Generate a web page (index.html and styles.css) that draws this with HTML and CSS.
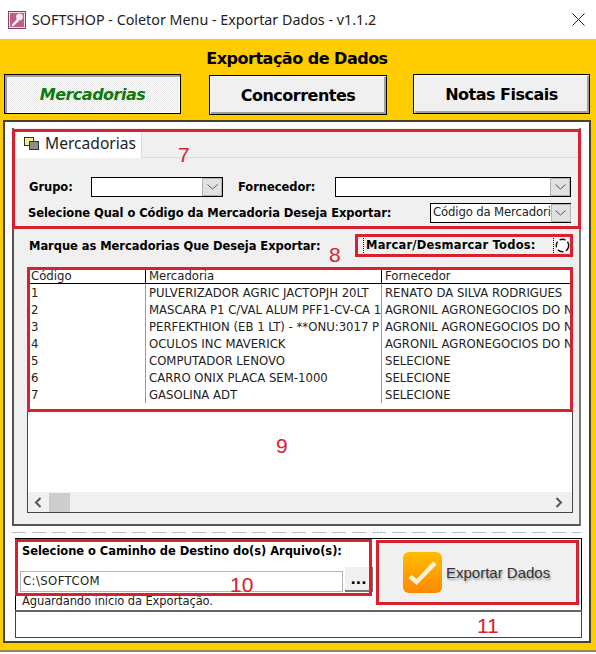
FILE: index.html
```html
<!DOCTYPE html>
<html lang="pt-BR">
<head>
    <meta charset="UTF-8">
    <title>SOFTSHOP - Coletor Menu - Exportar Dados - v1.1.2</title>
    <link rel="stylesheet" href="styles.css">
</head>
<body>
    <div class="titlebar">
        <svg class="app-icon" width="18" height="18" viewBox="0 0 18 18">
            <rect x="0.5" y="0.5" width="17" height="17" fill="#f3d9e4" stroke="#8a3d63"/>
            <rect x="2" y="2" width="14" height="14" fill="#b9608e"/>
            <path d="M3.5 14 L9 8 L11 10 L5 15.5 Z" fill="#fbeef4"/>
            <circle cx="11.5" cy="6" r="3.4" fill="#f7e6ee"/>
        </svg>
        <span class="title-text">SOFTSHOP - Coletor Menu - Exportar Dados - v1.1.2</span>
        <svg class="close-icon" width="13" height="13" viewBox="0 0 13 13">
            <path d="M0.5 0.5 L12.5 12.5 M12.5 0.5 L0.5 12.5" stroke="#222" stroke-width="1" fill="none"/>
        </svg>
    </div>

    <div class="frame">
        <h1 class="heading">Exportação de Dados</h1>
        <div class="tabs">
            <button class="tab-btn active">Mercadorias</button>
            <button class="tab-btn middle">Concorrentes</button>
            <button class="tab-btn">Notas Fiscais</button>
        </div>

        <div class="panel">
            <div class="group">
                <div class="tab-strip">
                    <div class="tab-label">
                        <svg width="15" height="13" viewBox="0 0 15 13">
                            <rect x="0.5" y="0.5" width="9" height="8" fill="#f5ee8c" stroke="#333"/>
                            <rect x="5.5" y="4.5" width="9" height="8" fill="#8c8c8c" stroke="#333"/>
                        </svg>
                        <span>Mercadorias</span>
                    </div>
                </div>

                <div class="filters">
                    <div class="filter-row">
                        <label class="lbl lbl-grupo">Grupo:</label>
                        <div class="combo combo-grupo"><span class="combo-arrow"><svg width="11" height="6" viewBox="0 0 11 6"><path d="M0.5 0.5 L5.5 5 L10.5 0.5" fill="none" stroke="#555"/></svg></span></div>
                        <label class="lbl lbl-forn">Fornecedor:</label>
                        <div class="combo combo-forn"><span class="combo-arrow"><svg width="11" height="6" viewBox="0 0 11 6"><path d="M0.5 0.5 L5.5 5 L10.5 0.5" fill="none" stroke="#555"/></svg></span></div>
                    </div>
                    <div class="filter-row row-codigo">
                        <label class="lbl">Selecione Qual o Código da Mercadoria Deseja Exportar:</label>
                        <div class="combo combo-cod"><span class="combo-text">Código da Mercadori</span><span class="combo-arrow"><svg width="11" height="6" viewBox="0 0 11 6"><path d="M0.5 0.5 L5.5 5 L10.5 0.5" fill="none" stroke="#555"/></svg></span></div>
                    </div>
                </div>

                <div class="mark-row">
                    <span class="lbl">Marque as Mercadorias Que Deseja Exportar:</span>
                    <div class="mark-all">
                        <span class="lbl">Marcar/Desmarcar Todos:</span>
                        <span class="radio-box">
                            <svg width="15" height="15" viewBox="0 0 15 15">
                                <circle cx="7.5" cy="7.5" r="6.2" fill="#fff" stroke="#111" stroke-width="1.4" stroke-dasharray="6 2.5"/>
                            </svg>
                        </span>
                    </div>
                </div>

                <div class="grid">
                    <div class="grid-body">
                        <div class="grid-row grid-head"><span class="c1">Código</span><span class="c2">Mercadoria</span><span class="c3">Fornecedor</span></div>
                        <div class="grid-row"><span class="c1">1</span><span class="c2">PULVERIZADOR AGRIC JACTOPJH 20LT</span><span class="c3">RENATO DA SILVA RODRIGUES</span></div>
                        <div class="grid-row"><span class="c1">2</span><span class="c2">MASCARA P1 C/VAL ALUM PFF1-CV-CA 1</span><span class="c3">AGRONIL AGRONEGOCIOS DO NORTE</span></div>
                        <div class="grid-row"><span class="c1">3</span><span class="c2">PERFEKTHION (EB 1 LT) - **ONU:3017 P</span><span class="c3">AGRONIL AGRONEGOCIOS DO NORTE</span></div>
                        <div class="grid-row"><span class="c1">4</span><span class="c2">OCULOS INC MAVERICK</span><span class="c3">AGRONIL AGRONEGOCIOS DO NORTE</span></div>
                        <div class="grid-row"><span class="c1">5</span><span class="c2">COMPUTADOR LENOVO</span><span class="c3">SELECIONE</span></div>
                        <div class="grid-row"><span class="c1">6</span><span class="c2">CARRO ONIX PLACA SEM-1000</span><span class="c3">SELECIONE</span></div>
                        <div class="grid-row"><span class="c1">7</span><span class="c2">GASOLINA ADT</span><span class="c3">SELECIONE</span></div>
                    </div>
                    <div class="hscroll">
                        <svg width="8" height="11" viewBox="0 0 8 11"><path d="M6.5 1 L2 5.5 L6.5 10" fill="none" stroke="#555" stroke-width="2"/></svg>
                        <span class="thumb"></span>
                        <svg class="arrow-right" width="8" height="11" viewBox="0 0 8 11"><path d="M1.5 1 L6 5.5 L1.5 10" fill="none" stroke="#555" stroke-width="2"/></svg>
                    </div>
                </div>
            </div>

            <div class="dashes"></div>

            <div class="export-box">
                <div class="path-side">
                    <div class="lbl path-label">Selecione o Caminho de Destino do(s) Arquivo(s):</div>
                    <div class="path-row">
                        <div class="path-input">C:\SOFTCOM</div>
                        <button class="browse">...</button>
                    </div>
                    <div class="status-text">Aguardando início da Exportação.</div>
                </div>
                <button class="export-btn">
                    <svg width="39" height="41" viewBox="0 0 39 41">
                        <defs>
                            <linearGradient id="orange" x1="0" y1="0" x2="0" y2="1">
                                <stop offset="0" stop-color="#ffbc00"/>
                                <stop offset="1" stop-color="#ff8800"/>
                            </linearGradient>
                        </defs>
                        <rect width="39" height="41" rx="6" fill="url(#orange)"/>
                        <path d="M7 24.5 L13.5 30 L32 11" fill="none" stroke="#fff3d6" stroke-width="4.5"/>
                    </svg>
                    <span>Exportar Dados</span>
                </button>
            </div>
            <div class="progress"></div>
        </div>
    </div>

    <!-- marcações vermelhas sobre a tela -->
    <div class="mark m7"></div>
    <div class="mark m8"></div>
    <div class="mark m9"></div>
    <div class="mark m10"></div>
    <div class="mark m11"></div>
    <span class="num n7">7</span>
    <span class="num n8">8</span>
    <span class="num n9">9</span>
    <span class="num n10">10</span>
    <span class="num n11">11</span>
</body>
</html>
```

FILE: styles.css
```css
* {
    box-sizing: border-box;
}
html, body {
    margin: 0;
    width: 596px;
    height: 654px;
    overflow: hidden;
    background: #fff;
    font-family: "Noto Sans", sans-serif;
    color: #000;
}
.titlebar {
    height: 39px;
    display: flex;
    align-items: center;
    padding: 0 11px 0 8px;
    background: #fff;
}
.title-text {
    margin-left: 6px;
    font-size: 14.3px;
    color: #222;
    flex: 1;
}
.frame {
    height: 613px;
    background: #ffcc00;
    padding: 0 5px 0 3px;
    border-bottom: 2px solid #8d8a55;
}
.heading {
    margin: 0;
    height: 35px;
    line-height: 39px;
    font-size: 16px;
    font-weight: bold;
    font-family: "DejaVu Sans", sans-serif;
    letter-spacing: -0.5px;
    text-align: center;
}
.tabs {
    display: flex;
    height: 46px;
    padding-left: 1px;
}
.tab-btn {
    flex: none;
    width: 177px;
    height: 40px;
    font-size: 16px;
    font-weight: bold;
    font-family: "DejaVu Sans", sans-serif;
    letter-spacing: -0.5px;
    background: #f0f0f0;
    border: 1px solid #000;
    box-shadow: inset 1px 1px 0 #fff, inset -2px -2px 0 #a0a0a0;
    padding: 0;
}
.tab-btn.middle {
    width: 178px;
    margin: 1px 26px 0 28px;
}
.tab-btn.active {
    color: #0a7a0a;
    font-style: italic;
    background: repeating-conic-gradient(#fff 0 25%, #e4e4e4 0 50%) 0 0 / 2px 2px;
    box-shadow: inset 2px 2px 0 #a0a0a0, inset -1px -1px 0 #fff;
}
.panel {
    width: 588px;
    height: 523px;
    background: #fff;
    border: 2px solid #45432f;
    padding: 6px 8px 0 7px;
}
.group {
    height: 398px;
    background: #f0f0f0;
    border: 2px solid #555;
    border-top: 0;
    border-right-color: #777;
    padding: 0 0 0 2px;
}
.tab-strip {
    height: 30px;
    padding: 4px 0 0 0;
    border-bottom: 1px solid #dcdcdc;
}
.tab-label {
    width: 126px;
    height: 26px;
    background: #fff;
    border-right: 1px solid #dcdcdc;
    display: flex;
    align-items: center;
    gap: 6px;
    padding: 0 0 4px 8px;
    font-size: 15.6px;
    color: #222;
}
.lbl {
    font-family: "DejaVu Sans", sans-serif;
    font-size: 11.5px;
    font-weight: bold;
    letter-spacing: -0.05px;
    white-space: nowrap;
}
.filters {
    padding: 19px 8px 0 12px;
}
.filter-row {
    display: flex;
    align-items: center;
    height: 20px;
}
.row-codigo {
    margin-top: 6px;
    justify-content: space-between;
}
.lbl-grupo {
    width: 63px;
    padding-left: 1px;
}
.lbl-forn {
    width: 97px;
    margin-left: 15px;
}
.combo {
    height: 20px;
    background: #fff;
    border: 1px solid #000;
    display: flex;
    justify-content: flex-end;
}
.combo-grupo {
    width: 132px;
}
.combo-forn {
    width: 236px;
}
.combo-cod {
    width: 141px;
    justify-content: space-between;
}
.combo-text {
    white-space: nowrap;
    font-family: "DejaVu Sans", sans-serif;
    font-size: 11.7px;
    line-height: 17px;
    letter-spacing: -0.15px;
    padding-left: 2px;
    color: #222;
}
.combo-arrow {
    width: 20px;
    flex: none;
    background: #e1e1e1;
    border: 1px solid #b5b5b5;
    display: flex;
    align-items: center;
    justify-content: center;
}
.mark-row {
    height: 32px;
    margin-top: 7px;
    padding-left: 13px;
    display: flex;
    align-items: center;
    position: relative;
}
.mark-all {
    position: absolute;
    left: 347px;
    top: 5px;
    width: 208px;
    height: 20px;
    padding-left: 2px;
    border-left: 1px dotted #000;
    display: flex;
    align-items: center;
    justify-content: space-between;
}
.mark-all .lbl {
    letter-spacing: 0.2px;
}
.radio-box {
    width: 18px;
    height: 20px;
    display: flex;
    align-items: center;
    justify-content: center;
    border-left: 1px dotted #000;
}
.grid {
    margin: 5px 6px 0 11px;
    height: 246px;
    background: #fff;
    border: 1px solid #444;
    display: flex;
    flex-direction: column;
}
.grid-body {
    flex: 1;
    overflow: hidden;
}
.grid-row {
    display: flex;
    height: 17px;
    font-family: "DejaVu Sans", sans-serif;
    font-size: 11.7px;
    line-height: 16px;
    color: #222;
    white-space: nowrap;
}
.grid-head {
    height: 16px;
    line-height: 14px;
    border-bottom: 1px solid #000;
}
.c1, .c2, .c3 {
    overflow: hidden;
    padding: 1px 0 0 3px;
}
.c1 {
    width: 118px;
    border-right: 1px solid #999;
}
.c2 {
    width: 236px;
    border-right: 1px solid #999;
}
.c3 {
    flex: 1;
}
.grid-head .c1, .grid-head .c2 {
    border-right-color: #000;
}
.hscroll {
    height: 20px;
    background: #f0f0f0;
    display: flex;
    align-items: center;
    padding: 0 9px 0 6px;
}
.thumb {
    width: 21px;
    height: 19px;
    margin-left: 7px;
    background: #cdcdcd;
}
.arrow-right {
    margin-left: auto;
}
.dashes {
    height: 1px;
    margin: 6px 0 5px 0;
    background: repeating-linear-gradient(90deg, #bbb 0 14px, transparent 14px 20px);
}
.export-box {
    width: 567px;
    height: 72px;
    margin-left: 3px;
    border-top: 1px solid #000;
    border-left: 1px solid #000;
    border-right: 1px solid #000;
    display: flex;
}
.path-side {
    width: 358px;
    padding: 5px 0 0 6px;
}
.path-label {
    height: 23px;
    line-height: 15px;
}
.path-row {
    display: flex;
    align-items: flex-end;
    height: 25px;
    margin-left: -2px;
}
.path-input {
    width: 323px;
    height: 21px;
    background: #fff;
    border: 1px solid #b5b5b5;
    padding-left: 2px;
    font-family: "DejaVu Sans", sans-serif;
    font-size: 11.7px;
    line-height: 19px;
    letter-spacing: 0.4px;
    color: #222;
}
.browse {
    width: 28px;
    height: 25px;
    margin-left: 2px;
    padding: 0;
    background: #f0f0f0;
    border: 0;
    border-right: 1px solid #777;
    border-bottom: 2px solid #777;
    font-weight: bold;
    font-size: 14px;
    font-family: "DejaVu Sans", sans-serif;
}
.status-text {
    font-family: "DejaVu Sans", sans-serif;
    font-size: 11.5px;
    line-height: 18px;
    letter-spacing: -0.1px;
    color: #222;
}
.export-btn {
    width: 203px;
    height: 65px;
    margin: 1px 0 0 2px;
    padding: 0 0 0 27px;
    background: #f0f0f0;
    border: 0;
    display: flex;
    align-items: center;
    gap: 4px;
    font-family: "Liberation Sans", sans-serif;
    font-size: 15px;
    color: #333;
    text-shadow: 1px 2px 2px #999;
}
.progress {
    width: 567px;
    height: 28px;
    margin-left: 3px;
    background: #fff;
    border: 1px solid #444;
    border-top: 2px solid #666;
}
.mark {
    position: absolute;
    border: 3px solid #d8202e;
}
.m7 {
    left: 12px;
    top: 129px;
    width: 569px;
    height: 100px;
}
.m8 {
    left: 355px;
    top: 234px;
    width: 218px;
    height: 23px;
}
.m9 {
    left: 27px;
    top: 267px;
    width: 546px;
    height: 145px;
}
.m10 {
    left: 15px;
    top: 539px;
    width: 357px;
    height: 57px;
}
.m11 {
    left: 376px;
    top: 540px;
    width: 203px;
    height: 65px;
}
.num {
    position: absolute;
    font-family: "Liberation Sans", sans-serif;
    font-size: 21px;
    line-height: 24px;
    color: #d8202e;
}
.n7 {
    left: 178px;
    top: 143px;
}
.n8 {
    left: 329px;
    top: 243px;
}
.n9 {
    left: 276px;
    top: 434px;
}
.n10 {
    left: 230px;
    top: 573px;
}
.n11 {
    left: 477px;
    top: 614px;
}
```
